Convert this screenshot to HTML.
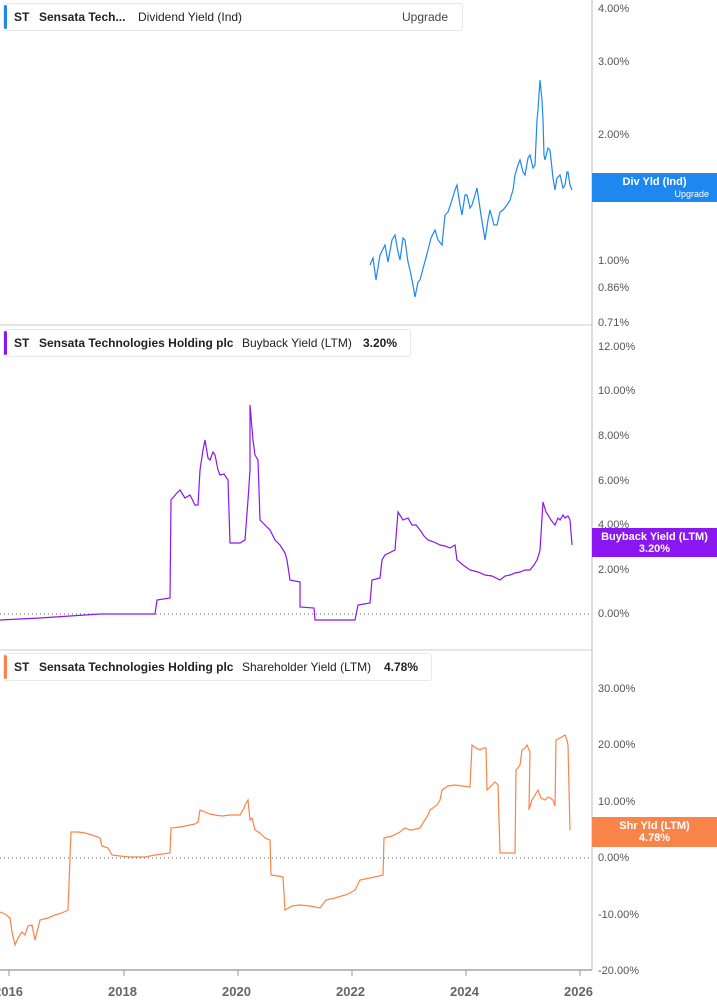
<!DOCTYPE html>
<html><head><meta charset="utf-8"><style>
body{margin:0;width:717px;height:1005px;background:#fff;font-family:"Liberation Sans",sans-serif;position:relative;overflow:hidden}
.leg{position:absolute;left:3px;height:26px;background:#fff;border:1px solid #e8e8ec;border-radius:3px;font-size:12px;line-height:26px;color:#222;white-space:nowrap}
.leg .bar{position:absolute;left:0;top:1px;bottom:1px;width:3px;border-radius:2px}
.leg span{position:absolute;top:0}
.yl{position:absolute;left:598px;font-size:11px;color:#555}
.tag{position:absolute;left:592px;width:125px;color:#fff;font-weight:bold;font-size:11px;text-align:center;line-height:12px}
.yr{position:absolute;top:984px;font-size:13px;font-weight:bold;color:#666}
</style></head><body>
<svg width="717" height="1005" style="position:absolute;left:0;top:0">
<line x1="592" y1="0" x2="592" y2="970" stroke="#bbb"/>
<line x1="0" y1="325" x2="592" y2="325" stroke="#ccc"/>
<line x1="0" y1="650" x2="592" y2="650" stroke="#ccc"/>
<line x1="0" y1="970" x2="592" y2="970" stroke="#bbb" stroke-width="2"/>
<g stroke="#999"><line x1="9" y1="970" x2="9" y2="976"/><line x1="124" y1="970" x2="124" y2="976"/><line x1="238" y1="970" x2="238" y2="976"/><line x1="352" y1="970" x2="352" y2="976"/><line x1="466" y1="970" x2="466" y2="976"/><line x1="580" y1="970" x2="580" y2="976"/></g>
<line x1="0" y1="614" x2="592" y2="614" stroke="#666" stroke-dasharray="1,3"/>
<line x1="0" y1="858" x2="592" y2="858" stroke="#666" stroke-dasharray="1,3"/>
<polyline fill="none" stroke="#1e88f0" stroke-width="1.2" points="370,265 373,258 376,280 380,255 385,245 388,262 392,240 395,235 398,252 400,260 403,238 405,240 408,262 410,270 413,285 415,297 418,282 420,280 424,265 428,250 431,238 435,230 438,240 442,245 445,215 448,212 452,200 455,190 457,185 460,205 462,215 465,195 467,195 470,208 472,205 475,195 477,188 481,215 485,240 488,220 490,210 494,225 497,225 500,212 503,210 507,205 510,200 513,190 515,175 518,165 520,160 523,172 525,175 528,158 530,155 533,168 535,165 537,120 538,110 540,80 542,100 543,120 544,155 545,160 548,148 550,150 553,178 555,190 557,178 560,175 563,188 565,185 567,172 568,172 570,185 572,190"/>
<polyline fill="none" stroke="#8a16f0" stroke-width="1.2" points="0,620 40,618 100,614 155,614 157,600 170,598 171,500 176,494 180,490 185,498 190,495 195,505 198,505 200,470 203,450 205,440 208,458 210,460 213,452 215,455 218,470 220,475 224,474 228,480 230,543 240,543 245,540 248,500 250,470 250,405 253,440 255,455 258,460 260,520 265,525 270,530 275,540 280,545 285,553 287,560 290,580 300,582 300,607 314,608 315,620 355,620 358,605 370,603 372,580 380,578 382,560 385,555 395,550 398,512 403,520 408,518 412,525 416,525 420,530 424,536 428,540 434,542 440,545 445,546 450,548 455,545 457,560 463,565 470,570 478,572 485,575 492,576 500,580 505,576 510,575 515,573 520,572 525,570 530,570 534,565 537,560 539,554 540,550 543,502 546,512 548,515 551,520 555,525 558,518 560,520 563,515 565,518 568,516 570,520 572,545"/>
<polyline fill="none" stroke="#f9844a" stroke-width="1.2" points="0,912 5,914 10,918 12,932 15,945 18,938 22,932 25,935 28,926 32,925 35,940 38,928 40,920 48,918 55,915 62,913 68,910 71,832 78,832 85,833 92,835 100,838 102,846 108,848 112,855 120,856 130,857 145,857 155,855 170,853 171,828 180,827 190,825 195,824 198,822 200,810 205,812 210,814 215,815 222,816 230,815 240,815 244,808 245,805 248,800 250,820 252,818 255,830 260,833 265,838 270,840 271,875 278,876 283,877 285,910 292,906 300,905 310,906 320,908 326,900 335,898 345,895 350,893 355,890 360,880 370,878 383,875 384,838 392,836 400,832 405,828 410,830 412,830 420,828 428,815 430,810 437,805 440,800 442,790 448,786 455,785 462,786 470,787 472,745 476,748 480,750 483,748 486,748 487,790 492,785 495,782 498,785 500,853 508,853 515,853 516,770 518,768 520,765 522,750 525,748 527,745 530,752 529,810 532,800 535,795 538,790 541,798 545,800 548,797 550,798 553,800 555,806 556,740 560,738 565,735 567,740 568,745 570,830"/>
</svg>
<div class="leg" style="top:3px;width:458px"><div class="bar" style="background:#1e88f0"></div><span style="left:10px;font-weight:bold">ST</span><span style="left:35px;font-weight:bold">Sensata Tech...</span><span style="left:134px">Dividend Yield (Ind)</span><span style="left:398px;color:#444">Upgrade</span></div>
<div class="leg" style="top:329px;width:406px"><div class="bar" style="background:#8a16f0"></div><span style="left:10px;font-weight:bold">ST</span><span style="left:35px;font-weight:bold">Sensata Technologies Holding plc</span><span style="left:238px">Buyback Yield (LTM)</span><span style="left:359px;font-weight:bold">3.20%</span></div>
<div class="leg" style="top:653px;width:427px"><div class="bar" style="background:#f9844a"></div><span style="left:10px;font-weight:bold">ST</span><span style="left:35px;font-weight:bold">Sensata Technologies Holding plc</span><span style="left:238px">Shareholder Yield (LTM)</span><span style="left:380px;font-weight:bold">4.78%</span></div>
<div class="yl" style="top:3px">4.00%</div><div class="yl" style="top:56px">3.00%</div><div class="yl" style="top:129px">2.00%</div><div class="yl" style="top:255px">1.00%</div><div class="yl" style="top:282px">0.86%</div><div class="yl" style="top:317px">0.71%</div>
<div class="yl" style="top:341px">12.00%</div><div class="yl" style="top:385px">10.00%</div><div class="yl" style="top:430px">8.00%</div><div class="yl" style="top:475px">6.00%</div><div class="yl" style="top:519px">4.00%</div><div class="yl" style="top:564px">2.00%</div><div class="yl" style="top:608px">0.00%</div>
<div class="yl" style="top:683px">30.00%</div><div class="yl" style="top:739px">20.00%</div><div class="yl" style="top:796px">10.00%</div><div class="yl" style="top:852px">0.00%</div><div class="yl" style="top:909px">-10.00%</div><div class="yl" style="top:965px">-20.00%</div>
<div class="tag" style="top:173px;height:29px;background:#1e88f0"><div style="padding-top:3px">Div Yld (Ind)</div><div style="text-align:right;padding-right:8px;font-size:9px;font-weight:normal">Upgrade</div></div>
<div class="tag" style="top:528px;height:29px;background:#8a16f0;padding-top:3px;box-sizing:border-box">Buyback Yield (LTM)<br>3.20%</div>
<div class="tag" style="top:817px;height:30px;background:#f9844a;padding-top:3px;box-sizing:border-box">Shr Yld (LTM)<br>4.78%</div>
<div class="yr" style="left:-6px">2016</div><div class="yr" style="left:108px">2018</div><div class="yr" style="left:222px">2020</div><div class="yr" style="left:336px">2022</div><div class="yr" style="left:450px">2024</div><div class="yr" style="left:564px">2026</div>
</body></html>
